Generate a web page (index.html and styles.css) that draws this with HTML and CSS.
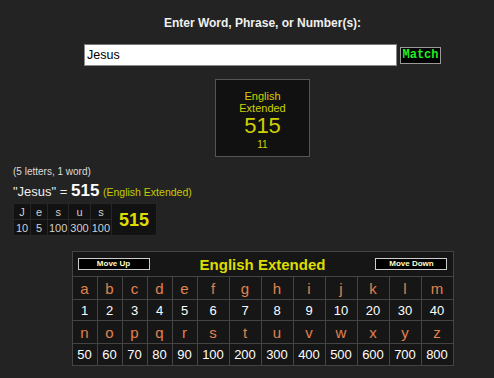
FILE: index.html
```html
<!DOCTYPE html>
<html>
<head>
<meta charset="utf-8">
<link rel="stylesheet" href="styles.css">
</head>
<body>
<div class="center">
  <div class="title">Enter Word, Phrase, or Number(s):</div>
  <div class="form">
    <input class="word" type="text" value="Jesus">
    <button class="match">Match</button>
  </div>
  <div class="box">
    <div class="box-name">English<br>Extended</div>
    <div class="box-val">515</div>
    <div class="box-red">11</div>
  </div>
</div>
<div class="result">
  <div class="count">(5 letters, 1 word)</div>
  <div class="eq">"Jesus" = <b class="eq-val">515</b> <span class="eq-name">(English Extended)</span></div>
  <table class="break">
    <tr class="br-l"><td>J</td><td>e</td><td>s</td><td>u</td><td>s</td><td class="br-sum" rowspan="2">515</td></tr>
    <tr class="br-n"><td>10</td><td>5</td><td>100</td><td>300</td><td>100</td></tr>
  </table>
</div>
<div class="center">
  <table class="cipher">
    <tr class="head">
      <td colspan="13">
        <div class="head-in">
          <button class="mv">Move Up</button>
          <span class="cname">English Extended</span>
          <button class="mv">Move Down</button>
        </div>
      </td>
    </tr>
    <tr class="lt r1">
      <td class="w2">a</td><td class="w2">b</td><td class="w2">c</td><td class="w2">d</td><td class="w2">e</td><td class="w3">f</td><td class="w3">g</td><td class="w3">h</td><td class="w3">i</td><td class="w3">j</td><td class="w3">k</td><td class="w3">l</td><td class="w3">m</td>
    </tr>
    <tr class="nm r2">
      <td>1</td><td>2</td><td>3</td><td>4</td><td>5</td><td>6</td><td>7</td><td>8</td><td>9</td><td>10</td><td>20</td><td>30</td><td>40</td>
    </tr>
    <tr class="lt r3">
      <td>n</td><td>o</td><td>p</td><td>q</td><td>r</td><td>s</td><td>t</td><td>u</td><td>v</td><td>w</td><td>x</td><td>y</td><td>z</td>
    </tr>
    <tr class="nm r4">
      <td>50</td><td>60</td><td>70</td><td>80</td><td>90</td><td>100</td><td>200</td><td>300</td><td>400</td><td>500</td><td>600</td><td>700</td><td>800</td>
    </tr>
  </table>
</div>
</body>
</html>
```

FILE: styles.css
```css
html, body {
  margin: 0;
  padding: 0;
  background: #232323;
  font-family: "Liberation Sans", Arial, sans-serif;
  color: #eee;
}
.center {
  width: 463px;
  padding-left: 31px;
  display: flex;
  flex-direction: column;
  align-items: center;
}
.title {
  margin-top: 16px;
  font-size: 12px;
  font-weight: bold;
  line-height: 14px;
  color: #f0f0f0;
}
.form {
  margin-top: 14px;
  display: flex;
  align-items: center;
  gap: 3px;
}
.word {
  box-sizing: border-box;
  width: 313px;
  height: 22px;
  margin: 0;
  padding: 0 2px;
  border: 1px solid #888;
  border-top-color: #777;
  background: #fff;
  font-family: "Liberation Sans", Arial, sans-serif;
  font-size: 12.5px;
  color: #000;
  outline: none;
}
.match {
  box-sizing: border-box;
  width: 41px;
  height: 17px;
  margin: 0;
  padding: 0;
  background: #000;
  border: 1px solid #999;
  color: #22ee22;
  font-family: "Liberation Mono", "Courier New", monospace;
  font-weight: bold;
  font-size: 12px;
  line-height: 14px;
}
.box {
  box-sizing: border-box;
  margin-top: 13px;
  width: 95px;
  height: 78px;
  background: #111;
  border: 1px solid #555;
  display: flex;
  flex-direction: column;
  align-items: center;
  padding-top: 10px;
  color: #d0d000;
}
.box-name {
  font-size: 11px;
  line-height: 12px;
  text-align: center;
}
.box-val {
  font-size: 22px;
  line-height: 24px;
}
.box-red {
  font-size: 10px;
  line-height: 13px;
}
.result {
  padding-left: 13px;
  margin-top: 9px;
}
.count {
  font-size: 10px;
  line-height: 12px;
  color: #ddd;
}
.eq {
  margin-top: 4px;
  font-size: 13px;
  line-height: 18px;
  color: #eee;
}
.eq-val {
  font-size: 17px;
  color: #fff;
}
.eq-name {
  font-size: 10.5px;
  color: #c4cc00;
}
.break {
  margin-top: 2px;
  border-collapse: collapse;
  background: #121212;
  font-size: 11px;
  color: #d0d0d0;
}
.break td {
  border: 1px solid #262626;
  padding: 0 1px;
  min-width: 14px;
  text-align: center;
  line-height: 14px;
}
.br-l td {
  height: 15px;
}
.br-n td {
  height: 15px;
}
.break td.br-sum {
  font-size: 18px;
  font-weight: bold;
  color: #dddd00;
  padding: 0 7px;
}
.cipher {
  margin-top: 15px;
  border-collapse: collapse;
  background: #161616;
  border: 1px solid #444;
}
.cipher td {
  border: 1px solid #444;
  padding: 0;
  text-align: center;
}
.head td {
  height: 24px;
}
.head-in {
  display: flex;
  justify-content: space-between;
  align-items: center;
  padding: 0 5px 0 5px;
}
.mv {
  box-sizing: border-box;
  width: 72px;
  height: 12px;
  margin: 0;
  padding: 0;
  background: #000;
  border: 1px solid #ccc;
  color: #ffffc8;
  font-family: "Liberation Sans", Arial, sans-serif;
  font-weight: bold;
  font-size: 8px;
  line-height: 10px;
}
.cname {
  font-size: 15px;
  font-weight: bold;
  color: #dddd00;
}
.w2 {
  width: 24px;
}
.w3 {
  width: 31px;
}
.lt td {
  font-size: 15px;
  color: #e0834f;
}
.nm td {
  font-size: 13px;
  color: #fff;
}
.r1 td { height: 22px; }
.r2 td { height: 20px; }
.r3 td { height: 22px; }
.r4 td { height: 21px; }
```
